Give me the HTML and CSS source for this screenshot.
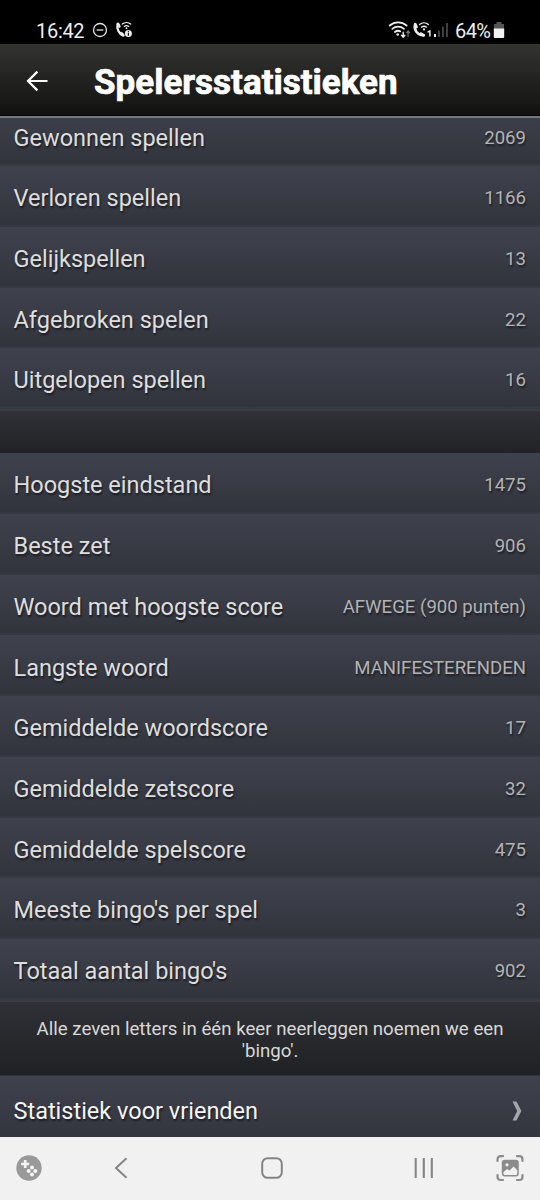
FILE: index.html
```html
<!DOCTYPE html>
<html lang="nl">
<head>
<meta charset="utf-8">
<title>Spelersstatistieken</title>
<link rel="stylesheet" href="styles.css">
</head>
<body>
<div class="screen">
  <div class="status">
    <span class="clock">16:42</span>
    <svg class="dnd" width="16" height="16" viewBox="0 0 16 16" fill="none" stroke="#e4e4e4" stroke-width="1.3"><circle cx="8" cy="8" r="6.5"/><path d="M4.6 8h6.8"/></svg>
    <svg class="call-info" width="18" height="18" viewBox="0 0 18 18" fill="none" stroke="#eee" stroke-linecap="round"><path d="M2.6 3.2C1.5 8 4 13 8 14.3" stroke-width="2.3"/><path d="M3 3l1.3 2.4M6.3 12.2l2 2" stroke-width="2.8"/><path d="M7.3 3.1a6.4 6.4 0 0 1 8.4 0M9.3 5.4a3.6 3.6 0 0 1 4.4 0" stroke-width="1.3"/><circle cx="11.5" cy="7.2" r=".9" fill="#eee" stroke="none"/><circle cx="13.4" cy="12.5" r="3.5" fill="#eee" stroke="none"/><path d="M13.4 12.2v2M13.4 10.4v.1" stroke="#111" stroke-width="1.2"/></svg>
    <div class="signals">
      <svg width="23" height="19" viewBox="0 0 21 18" fill="none" stroke="#eee" stroke-width="1.7" stroke-linecap="round"><path d="M1.2 4.3a12 12 0 0 1 16 0M3.7 7.4a8.2 8.2 0 0 1 11 0M6.2 10.4a4.5 4.5 0 0 1 5-.6"/><circle cx="8.8" cy="12.8" r="1.2" fill="#eee" stroke="none"/><path d="M14 10.5v4.7m-1.6-1.7 1.6 1.8 1.6-1.8" stroke-width="1.3"/><path d="M18.6 14.5v-5m-1.4 1.5 1.4-1.6 1.4 1.6" stroke="#777" stroke-width="1.2"/></svg>
      <svg width="22" height="18" viewBox="0 0 21 18" fill="none" stroke="#eee" stroke-linecap="round"><path d="M3.5 3.5C2.2 9 6 14.5 12 14.2" stroke-width="2.5"/><path d="M3.8 3.2 5 6M9.4 12.7l2.7 1.5" stroke-width="2.8"/><path d="M8.1 3.5a6.8 6.8 0 0 1 8.8 0M10.1 6.1a3.9 3.9 0 0 1 4.8 0" stroke-width="1.4"/><circle cx="12.5" cy="8.4" r="1.1" fill="#eee" stroke="none"/><path d="m16.6 10.9 1.8-1v5.2" stroke-width="1.5"/></svg>
      <svg width="16" height="18" viewBox="0 0 16 18"><path fill="#eee" d="M1 13h2v3H1z"/><path fill="#555" d="M5.2 9.5h1.5V16H5.2zM9.2 5.5h1.5V16H9.2zM13.2 2h1.5v14h-1.5z"/></svg>
    </div>
    <span class="percent">64%</span>
    <svg class="battery" width="12" height="18" viewBox="0 0 12 18"><path fill="#555" d="M3.5 1h5v2H11v5H1V3h2.5z"/><path fill="#f2f2f2" d="M.8 7.5h10.4V16q0 1-1 1H1.8q-1 0-1-1z"/></svg>
  </div>
  <header class="appbar">
    <svg class="back" width="22" height="22" viewBox="0 0 22 22" fill="none" stroke="#fff" stroke-width="2.2"><path d="M21.5 11H2M11.4 1.6 2 11l9.4 9.4"/></svg>
    <h1>Spelersstatistieken</h1>
  </header>
  <main class="content">
    <section class="group group-first">
      <div class="row"><span>Gewonnen spellen</span><b>2069</b></div>
      <div class="row"><span>Verloren spellen</span><b>1166</b></div>
      <div class="row"><span>Gelijkspellen</span><b>13</b></div>
      <div class="row"><span>Afgebroken spelen</span><b>22</b></div>
      <div class="row"><span>Uitgelopen spellen</span><b>16</b></div>
    </section>
    <div class="spacer"></div>
    <section class="group">
      <div class="row"><span>Hoogste eindstand</span><b>1475</b></div>
      <div class="row"><span>Beste zet</span><b>906</b></div>
      <div class="row"><span>Woord met hoogste score</span><b>AFWEGE (900 punten)</b></div>
      <div class="row"><span>Langste woord</span><b>MANIFESTERENDEN</b></div>
      <div class="row"><span>Gemiddelde woordscore</span><b>17</b></div>
      <div class="row"><span>Gemiddelde zetscore</span><b>32</b></div>
      <div class="row"><span>Gemiddelde spelscore</span><b>475</b></div>
      <div class="row"><span>Meeste bingo's per spel</span><b>3</b></div>
      <div class="row"><span>Totaal aantal bingo's</span><b>902</b></div>
    </section>
    <p class="note">Alle zeven letters in één keer neerleggen noemen we een 'bingo'.</p>
    <div class="row link"><span>Statistiek voor vrienden</span><svg width="10" height="20" viewBox="0 0 10 20"><path fill="#a5a6ac" d="M.5.5h4L9.4 10 4.5 19.5h-4L5.2 10z"/></svg></div>
  </main>
  <nav class="navbar">
    <svg width="26" height="26" viewBox="0 0 26 26"><circle cx="13" cy="13" r="12.7" fill="#999"/><path d="M9.2 5v8M5.2 9h8" stroke="#f5f5f5" stroke-width="2.7"/><g fill="#f5f5f5"><circle cx="16" cy="12.6" r="2"/><circle cx="12.7" cy="16" r="2"/><circle cx="19.3" cy="16" r="2"/><circle cx="16" cy="19.4" r="2"/></g></svg>
    <svg width="14" height="22" viewBox="0 0 14 22" fill="none" stroke="#858585" stroke-width="2"><path d="M12.5 1.3 2 11l10.5 9.7"/></svg>
    <svg width="22" height="22" viewBox="0 0 22 22" fill="none" stroke="#858585" stroke-width="2"><rect x="1.2" y="1.2" width="19.6" height="19.6" rx="5.5"/></svg>
    <svg width="20" height="20" viewBox="0 0 20 20" stroke="#858585" stroke-width="2.1"><path d="M1.7 0v20M9.8 0v20M17.8 0v20"/></svg>
    <svg width="28" height="28" viewBox="0 0 28 28" fill="none" stroke="#8c8c8c" stroke-width="2.2" stroke-linecap="round"><path d="M1.5 7V5.5q0-3.3 3.3-3.3H7M21 2.2h2.2q3.3 0 3.3 3.3V7M26.5 21v1.7q0 3.3-3.3 3.3H21M7 26H4.8q-3.3 0-3.3-3.3V21"/><rect x="5.8" y="5.8" width="17" height="16.7" rx="3" fill="#8c8c8c" stroke="none"/><circle cx="11" cy="10.8" r="1.6" fill="#f2f2f2" stroke="none"/><path d="M7.4 18.2 11 15l2.5 1.6 4.2-4.2 3.6 3.8v3.3q0 1.6-1.6 1.6H9q-1.6 0-1.6-1.6z" fill="#f2f2f2" stroke="none"/></svg>
  </nav>
</div>
</body>
</html>
```
FILE: styles.css
```css
* { box-sizing: border-box; }
body { margin: 0; background: #000; font-family: Roboto, sans-serif; }
.screen { width: 540px; height: 1200px; display: flex; flex-direction: column; overflow: hidden; }
svg { display: block; flex: none; }

.status { height: 44px; flex: none; display: flex; align-items: center; padding: 17px 35px 0 36px; color: #eee; font-size: 20px; line-height: 27px; }
.clock { width: 48px; padding-top: 1px; letter-spacing: -.3px; }
.dnd { margin: -1px 0 0 8px; }
.call-info { margin: -1px 0 0 7px; }
.signals { display: flex; margin: -1px 0 0 auto; }
.percent { width: 37px; margin: 1px 0 0 6px; letter-spacing: -.6px; }
.battery { margin: -1px 0 0 1px; }

.appbar { height: 74px; flex: none; display: flex; align-items: center; padding: 3px 0 0 26px; background: linear-gradient(#333331, #111110); border-bottom: 2px solid #74777b; box-shadow: inset 0 -1px #080808; }
.back { margin-top: -1px; }
.appbar h1 { margin: 2px 0 0 46px; color: #fff; font-size: 35px; font-weight: 700; line-height: 42px; white-space: nowrap; -webkit-text-stroke: .7px #fff; }

.content { flex: 1; min-height: 0; overflow: hidden; background: #27282c; }
.group { border-bottom: 2px solid #393b45; }
.group-first { margin-top: -12.6px; }
.row { height: 60.72px; display: flex; align-items: center; justify-content: space-between; padding: 3.6px 14px 0 13.5px; background: linear-gradient(#3f424d, #32343d 96%, #363842 97%); color: #dedede; font-size: 23.5px; text-shadow: 1px 2px 2px rgba(0, 0, 0, .5); white-space: nowrap; }
.row b { color: #b3b3b5; font-size: 18.6px; font-weight: 400; }
.spacer { height: 42.2px; background: linear-gradient(#303136, #212225); }
.note { height: 74px; margin: 0; padding: 16px 30px 0; background: linear-gradient(#303136, #202124); border-bottom: 1px solid #303239; color: #d8d8d8; font-size: 18.66px; line-height: 22px; text-align: center; }
.link { height: 70px; padding: 1px 18px 0 13.5px; color: #f4f4f4; }

.navbar { height: 63px; flex: none; display: grid; grid-template-columns: 58px 126px 176px 127px 46px; justify-items: center; align-items: center; padding-bottom: 1px; background: #f1f1f1; }
```
